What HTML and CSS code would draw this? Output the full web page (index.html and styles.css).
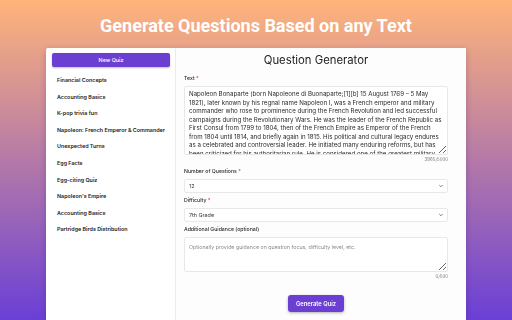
FILE: index.html
```html
<!DOCTYPE html>
<html lang="en">
<head>
    <meta charset="UTF-8">
    <meta name="viewport" content="width=device-width, initial-scale=1.0">
    <title>Question Generator</title>
    <link rel="stylesheet" href="styles.css">
</head>
<body>
    <h1 class="page-title">Generate Questions Based on any Text</h1>

    <div class="app">
        <aside class="sidebar">
            <button class="new-quiz">New Quiz</button>
            <ul class="quiz-list">
                <li>Financial Concepts</li>
                <li>Accounting Basics</li>
                <li>K-pop trivia fun</li>
                <li>Napoleon: French Emperor &amp; Commander</li>
                <li>Unexpected Turns</li>
                <li>Egg Facts</li>
                <li>Egg-citing Quiz</li>
                <li>Napoleon's Empire</li>
                <li>Accounting Basics</li>
                <li>Partridge Birds Distribution</li>
            </ul>
        </aside>

        <main class="main">
            <h2 class="main-title">Question Generator</h2>

            <div class="field">
                <label for="text">Text <span class="req">*</span></label>
                <textarea id="text" class="source-text">Napoleon Bonaparte (born Napoleone di Buonaparte;[1][b] 15 August 1769 – 5 May 1821), later known by his regnal name Napoleon I, was a French emperor and military commander who rose to prominence during the French Revolution and led successful campaigns during the Revolutionary Wars. He was the leader of the French Republic as First Consul from 1799 to 1804, then of the French Empire as Emperor of the French from 1804 until 1814, and briefly again in 1815. His political and cultural legacy endures as a celebrated and controversial leader. He initiated many enduring reforms, but has been criticized for his authoritarian rule. He is considered one of the greatest military commanders in history and his wars and campaigns are still studied at military schools worldwide. Napoleon's political and cultural legacy endures, and he has been one of the most celebrated and controversial leaders in world history. Born on the island of Corsica to a family of Italian origin, Napoleon moved to mainland France in 1779 and was commissioned as an officer in the French Army in 1785.</textarea>
                <div class="counter">3965/5000</div>
            </div>

            <div class="field">
                <label for="count">Number of Questions <span class="req">*</span></label>
                <div class="select-wrap">
                    <select id="count">
                        <option>12</option>
                    </select>
                    <svg class="chevron" viewBox="0 0 10 10"><path d="M2.5 3.8 5 6.3 7.5 3.8" fill="none" stroke="#555" stroke-width="1.2" stroke-linecap="round" stroke-linejoin="round"/></svg>
                </div>
            </div>

            <div class="field">
                <label for="level">Difficulty <span class="req">*</span></label>
                <div class="select-wrap">
                    <select id="level">
                        <option>7th Grade</option>
                    </select>
                    <svg class="chevron" viewBox="0 0 10 10"><path d="M2.5 3.8 5 6.3 7.5 3.8" fill="none" stroke="#555" stroke-width="1.2" stroke-linecap="round" stroke-linejoin="round"/></svg>
                </div>
            </div>

            <div class="field">
                <label for="guidance">Additional Guidance (optional)</label>
                <textarea id="guidance" class="guidance" placeholder="Optionally provide guidance on question focus, difficulty level, etc."></textarea>
                <div class="counter">0/500</div>
            </div>

            <div class="actions">
                <button class="generate">Generate Quiz</button>
            </div>
        </main>
    </div>
</body>
</html>
```

FILE: styles.css
```css
html, body {
    height: 100%;
}

body {
    margin: 0;
    display: flex;
    flex-direction: column;
    font-family: 'Inter', 'Liberation Sans', sans-serif;
    color: #222222;
    background: linear-gradient(to bottom, #ffb47a, #6a3fd6);
    overflow: hidden;
}

.page-title {
    margin: 0;
    height: 48px;
    line-height: 52px;
    text-align: center;
    font-family: 'Roboto', sans-serif;
    font-weight: 700;
    font-size: 18px;
    color: #ffffff;
}

.app {
    flex: 1;
    display: flex;
    margin: 0 46px;
    background: #ffffff;
    border-radius: 2px 2px 0 0;
    box-shadow: 0 2px 6px rgba(60, 20, 120, 0.25);
}

/* sidebar */
.sidebar {
    width: 130px;
    flex-shrink: 0;
    padding: 5px 5px 0 6px;
    box-sizing: border-box;
    border-right: 1px solid #ececec;
}

.new-quiz {
    display: block;
    width: 100%;
    height: 14px;
    padding: 0;
    border: none;
    border-radius: 2px;
    background: #6b3fd2;
    color: #ffffff;
    font-family: inherit;
    font-size: 5.4px;
    font-weight: 500;
    box-shadow: 0 1px 2px rgba(0, 0, 0, 0.25);
}

.quiz-list {
    list-style: none;
    margin: 5px 0 0;
    padding: 0 0 0 5px;
}

.quiz-list li {
    line-height: 16.6px;
    font-size: 5.4px;
    font-weight: 600;
    color: #222222;
    white-space: nowrap;
}

/* main form */
.main {
    flex: 1;
    padding: 0 18px 0 8px;
    background: #fdfdfd;
}

.main-title {
    margin: 4px 0 7px;
    text-align: center;
    font-size: 11.3px;
    font-weight: 400;
    line-height: 16px;
    color: #1b1b1b;
}

.field {
    margin-bottom: 4px;
}

.field label {
    display: block;
    font-size: 5.2px;
    font-weight: 500;
    line-height: 7px;
    margin-bottom: 4px;
    color: #2b2b2b;
}

.req {
    color: #e0393e;
}

textarea {
    display: block;
    width: 100%;
    box-sizing: border-box;
    border: 1px solid #e6e8eb;
    border-radius: 2px;
    background: #ffffff;
    font-family: inherit;
    color: #333333;
    font-size: 5.3px;
    line-height: 8.5px;
    padding: 3px 4px;
    resize: vertical;
}

textarea::-webkit-scrollbar {
    width: 6px;
}

textarea::-webkit-scrollbar-track {
    background: #f4f4f4;
}

textarea::-webkit-scrollbar-thumb {
    background: #555555;
    border-radius: 1px;
    border: 1px solid #f4f4f4;
}

.source-text {
    height: 69px;
    padding-right: 2px;
    font-size: 6.15px;
    color: #2a2a2a;
}

.guidance {
    height: 35px;
    padding-top: 5px;
}

.guidance::placeholder {
    color: #8a8a8a;
}

.counter {
    text-align: right;
    font-size: 4.4px;
    line-height: 9px;
    color: #777777;
}

.select-wrap {
    position: relative;
}

select {
    display: block;
    width: 100%;
    height: 14px;
    padding: 0 4px;
    border: 1px solid #e6e8eb;
    border-radius: 2px;
    background: #ffffff;
    font-family: inherit;
    font-size: 5.4px;
    color: #333333;
    appearance: none;
    -webkit-appearance: none;
}

.chevron {
    position: absolute;
    right: 4px;
    top: 4px;
    width: 6px;
    height: 6px;
    pointer-events: none;
}

.actions {
    text-align: center;
    padding-top: 5px;
}

.generate {
    height: 17px;
    padding: 0 8px;
    border: none;
    border-radius: 3px;
    background: #6b3fd2;
    color: #ffffff;
    font-family: inherit;
    font-size: 5.8px;
    font-weight: 600;
    box-shadow: 0 1px 3px rgba(0, 0, 0, 0.3);
}
```
